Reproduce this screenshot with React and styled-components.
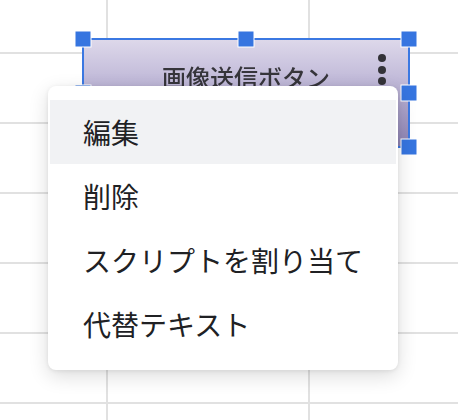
import * as React from 'react';
import styled, { createGlobalStyle } from 'styled-components';

const GlobalStyle = createGlobalStyle`
    html, body {
        margin: 0;
        padding: 0;
        background: #fff;
    }
    body {
        font-family: "Noto Sans CJK JP", "Noto Sans", sans-serif;
    }
`;

const Sheet = styled.div`
    position: relative;
    width: 458px;
    height: 420px;
    overflow: hidden;
    background: #fff;
`;

const Cells = styled.div`
    display: grid;
    grid-template-columns: 106px 200px 1fr;
    grid-template-rows: 52px repeat(6, 68px);
    gap: 2px;
    background-color: #e1e1e1;
    height: 100%;
`;

const Cell = styled.div`
    background-color: #fff;
`;

const Selection = styled.div`
    position: absolute;
    left: 82px;
    top: 38px;
    width: 328px;
    height: 110px;
    box-sizing: border-box;
    border: 2px solid #3b78e2;
`;

const Handle = styled.span`
    position: absolute;
    width: 15px;
    height: 15px;
    left: calc(${(p) => p.$x}% + ${(p) => p.$x / 50 - 1}px);
    top: calc(${(p) => p.$y}% + ${(p) => p.$y / 50 - 1}px);
    transform: translate(-50%, -50%);
    background-color: #3675e0;
    box-shadow: 0 0 0 1px #fff;
`;

const DrawingButton = styled.div`
    display: flex;
    justify-content: center;
    align-items: flex-start;
    box-sizing: border-box;
    height: 100%;
    padding-top: 23px;
    border-radius: 3px;
    background: linear-gradient(180deg, #ddd8ea 0%, #c3bcda 35%, #a69dc6 70%, #8d82b2 100%);
    position: relative;
`;

const ButtonLabel = styled.span`
    font-size: 24px;
    line-height: 28px;
    font-weight: 500;
    color: #36353b;
    filter: blur(0.7px);
`;

const Kebab = styled.div`
    position: absolute;
    right: 22px;
    top: 14px;
    display: flex;
    flex-direction: column;
    gap: 3.6px;
`;

const Dot = styled.span`
    width: 8px;
    height: 8px;
    border-radius: 50%;
    background-color: #333238;
`;

const Menu = styled.ul`
    position: absolute;
    left: 48px;
    top: 86px;
    width: 350px;
    margin: 0;
    padding: 14px 2px;
    box-sizing: border-box;
    list-style: none;
    background-color: #fff;
    border-radius: 8px;
    box-shadow: 0 6px 20px rgba(0, 0, 0, 0.14), 0 1px 4px rgba(0, 0, 0, 0.08);
`;

const MenuItem = styled.li`
    display: flex;
    align-items: center;
    height: 64px;
    padding-left: 33px;
    font-size: 28px;
    line-height: 1;
    color: #202124;
    white-space: nowrap;
    background-color: ${(p) => (p.$active ? '#f1f2f4' : 'transparent')};
`;

const handles = [
    [0, 0],
    [50, 0],
    [100, 0],
    [0, 50],
    [100, 50],
    [0, 100],
    [50, 100],
    [100, 100],
];

const items = ['編集', '削除', 'スクリプトを割り当て', '代替テキスト'];

const App = () => (
    <Sheet>
        <GlobalStyle />
        <Cells>
            {Array.from({ length: 21 }).map((_, i) => (
                <Cell key={i} />
            ))}
        </Cells>
        <Selection>
            <DrawingButton>
                <ButtonLabel>画像送信ボタン</ButtonLabel>
                <Kebab>
                    <Dot />
                    <Dot />
                    <Dot />
                </Kebab>
            </DrawingButton>
            {handles.map(([x, y]) => (
                <Handle key={`${x}-${y}`} $x={x} $y={y} />
            ))}
        </Selection>
        <Menu>
            {items.map((label, i) => (
                <MenuItem key={label} $active={i === 0}>
                    {label}
                </MenuItem>
            ))}
        </Menu>
    </Sheet>
);

export default App;
